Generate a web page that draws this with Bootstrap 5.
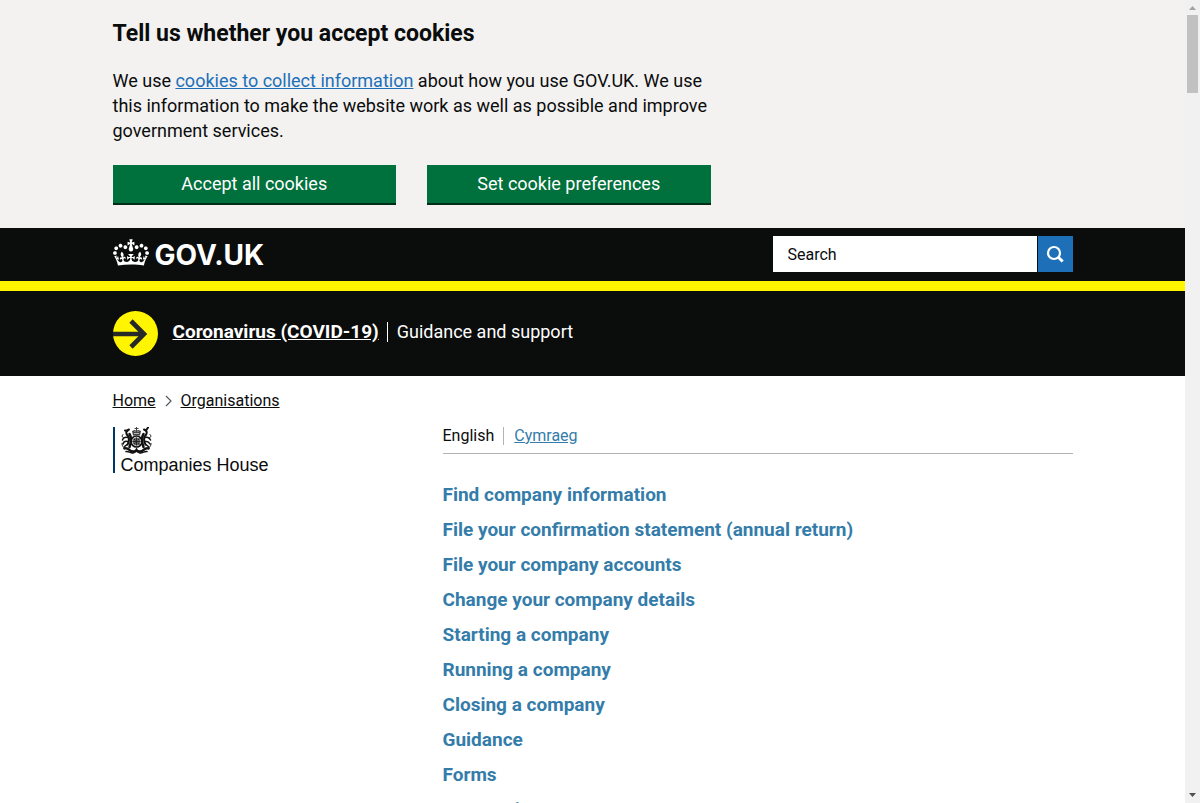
<!DOCTYPE html>
<html lang="en">
<head>
<meta charset="utf-8">
<meta name="viewport" content="width=device-width, initial-scale=1">
<title>Companies House - GOV.UK</title>
<link href="https://cdn.jsdelivr.net/npm/bootstrap@5.3.0/dist/css/bootstrap.min.css" rel="stylesheet">
<style>
  html { overflow: hidden; }
  body { font-family: Roboto, "Liberation Sans", sans-serif; font-size: 18px; line-height: 25px; color: #0b0c0c; background: #fff; padding-right: 15px; }
  .page-width { max-width: 990px; padding-left: 15px; padding-right: 15px; }
  .cookie-banner { background: #f3f2f1; padding: 19px 0 23px; }
  .cookie-banner h2 { font-size: 23px; line-height: 30px; font-weight: 700; margin-bottom: 19px; }
  .cookie-copy { max-width: 610px; margin-bottom: 22px; }
  .cookie-copy a { color: #1d70b8; }
  .cookie-actions { max-width: 598px; gap: 31px; }
  .btn-govuk { background: #00703c; color: #fff; border: 0; border-radius: 0; font-size: 18px; line-height: 25px; padding: 6px 10px 7px; box-shadow: 0 2px 0 #002d18; margin-bottom: 2px; }
  .btn-govuk:hover { background: #005a30; color: #fff; }
  .site-header { background: #0b0c0c; border-bottom: 10px solid #fff500; padding: 8px 0; }
  .site-logo { font-family: Inter, "Liberation Sans", sans-serif; font-weight: 700; font-size: 28px; line-height: 36px; color: #fff; gap: 6px; padding-top: 1px; }
  .site-logo svg { margin-top: 2px; }
  .site-search { width: 300px; gap: 1px; }
  .site-search .form-control { height: 36px; border: 0; border-radius: 0; padding: 0 15px; font-size: 16px; color: #0b0c0c; background: #fff; }
  .site-search .form-control::placeholder { color: #0b0c0c; opacity: 1; }
  .site-search .btn { width: 35px; height: 36px; background: #1d70b8; border: 0; border-radius: 0; padding: 0; flex: none; }
  .covid-bar { background: #0b0c0c; color: #fff; padding: 20px 0; }
  .covid-bar .covid-text { padding: 8px 0 12px 15px; }
  .covid-bar a { color: #fff; font-size: 19px; font-weight: 700; }
  .covid-bar .covid-note { border-left: 1px solid #fff; line-height: 20px; margin-left: 8px; padding-left: 9px; }
  .crumbs { font-size: 16px; line-height: 20px; padding-top: 15px; margin-bottom: 16px; gap: 9px; }
  .crumbs a { color: #0b0c0c; }
  .org-logo { border-left: 2px solid #003764; padding-left: 6px; height: 46px; font: 18px/22px "Liberation Sans", Arial, sans-serif; }
  .languages { font-size: 16px; line-height: 18px; border-bottom: 1px solid #b1b4b6; padding-bottom: 8px; margin-bottom: 24px; }
  .languages li + li { border-left: 1px solid #b1b4b6; margin-left: 9px; padding-left: 10px; }
  .languages a, .feature-links a { color: #347ca9; }
  .feature-links { display: grid; gap: 10px; font-size: 19px; font-weight: 700; line-height: 25px; padding-top: 4px; }
  .feature-links a { text-decoration: none; }
  .scroll-rail { width: 15px; background: #f1f1f1; z-index: 10; }
  .scroll-rail .thumb { width: 11px; height: 78px; background: #c1c1c1; }
</style>
</head>
<body>
<section class="cookie-banner" aria-label="Cookie banner">
  <div class="container-fluid page-width">
    <h2>Tell us whether you accept cookies</h2>
    <p class="cookie-copy">We use <a href="#">cookies to collect information</a> about how you use GOV.UK. We use this information to make the website work as well as possible and improve government services.</p>
    <div class="cookie-actions d-flex">
      <button type="button" class="btn btn-govuk flex-fill w-50">Accept all cookies</button>
      <button type="button" class="btn btn-govuk flex-fill w-50">Set cookie preferences</button>
    </div>
  </div>
</section>

<header class="site-header">
  <div class="container-fluid page-width d-flex justify-content-between align-items-start">
    <a href="#" class="site-logo d-flex align-items-start text-decoration-none">
      <svg width="36" height="27" viewBox="0 0 132 97" fill="#fff" aria-hidden="true"><path fill-rule="evenodd" d="M25 30.2c3.5 1.5 7.7-.2 9.1-3.7 1.5-3.6-.2-7.8-3.9-9.2-3.6-1.4-7.6.3-9.1 3.9-1.4 3.5.3 7.5 3.9 9zM9 39.5c3.6 1.5 7.8-.2 9.2-3.7 1.5-3.6-.2-7.8-3.9-9.1-3.6-1.5-7.6.2-9.1 3.8-1.4 3.5.3 7.5 3.8 9zM4.4 57.2c3.5 1.5 7.7-.2 9.1-3.8 1.5-3.6-.2-7.7-3.9-9.1-3.5-1.5-7.6.3-9.1 3.8-1.4 3.5.3 7.6 3.9 9.1zm38.3-21.4c3.5 1.5 7.7-.2 9.1-3.8 1.5-3.6-.2-7.7-3.9-9.1-3.6-1.5-7.6.3-9.1 3.8-1.3 3.6.4 7.7 3.9 9.1zm64.4-5.6c-3.6 1.5-7.8-.2-9.1-3.7-1.5-3.6.2-7.8 3.8-9.2 3.6-1.4 7.7.3 9.2 3.9 1.3 3.5-.4 7.5-3.9 9zm15.9 9.3c-3.6 1.5-7.7-.2-9.1-3.7-1.5-3.6.2-7.8 3.7-9.1 3.6-1.5 7.7.2 9.2 3.8 1.5 3.5-.3 7.5-3.8 9zm4.7 17.7c-3.6 1.5-7.8-.2-9.2-3.8-1.5-3.6.2-7.7 3.9-9.1 3.6-1.5 7.7.3 9.2 3.8 1.3 3.5-.4 7.6-3.9 9.1zM89.3 35.8c-3.6 1.5-7.8-.2-9.2-3.8-1.4-3.6.2-7.7 3.9-9.1 3.6-1.5 7.7.3 9.2 3.8 1.4 3.6-.3 7.7-3.9 9.1zM69.7 17.7l8.9 4.7V9.3l-8.9 2.8c-.2-.3-.5-.6-.9-.9L72.4 0H59.6l3.5 11.2c-.3.3-.6.5-.9.9l-8.8-2.8v13.1l8.8-4.7c.3.3.6.7.9.9l-5 15.4v.1c-.2.8-.4 1.6-.4 2.4 0 4.1 3.1 7.5 7 8.1h.2c.3 0 .7.1 1 .1.4 0 .7 0 1-.1h.2c4-.6 7.1-4.1 7.1-8.1 0-.8-.1-1.7-.4-2.4V34l-5.1-15.4c.4-.2.7-.6 1-.9zM66 92.8c16.9 0 32.8 1.1 47.1 3.2 4-16.9 8.9-26.7 14-33.5l-9.6-3.4c1 4.9 1.1 7.2 0 10.2-1.5-1.4-3-4.3-4.2-8.7L108.6 76c2.8-2 5-3.2 7.5-3.3-4.4 9.4-10 11.9-13.6 11.2-4.3-.8-6.3-4.6-5.6-7.9 1-4.7 5.7-5.9 8-.5 4.3-8.7-3-11.4-7.6-8.8 7.1-7.2 7.9-13.5 2.1-21.1-8 6.1-8.1 12.3-4.5 20.8-4.7-5.4-12.1-2.5-9.5 6.2 3.4-5.2 7.9-2 7.2 3.1-.6 4.3-6.4 7.8-13.5 7.2-10.3-.9-10.9-8-11.2-13.8 2.5-.5 7.1 1.8 11 7.3L80.2 60c-4.1 4.4-8 5.3-12.3 5.4 1.4-4.4 8-11.6 8-11.6H55.5s6.4 7.2 7.9 11.6c-4.2-.1-8-1-12.3-5.4l1.4 16.4c3.9-5.5 8.5-7.7 10.9-7.3-.3 5.8-.9 12.8-11.1 13.8-7.2.6-12.9-2.9-13.5-7.2-.7-5 3.8-8.3 7.1-3.1 2.7-8.7-4.6-11.6-9.4-6.2 3.7-8.5 3.6-14.7-4.6-20.8-5.8 7.6-5 13.9 2.2 21.1-4.7-2.6-11.9.1-7.7 8.8 2.3-5.5 7.1-4.2 8.1.5.7 3.3-1.3 7.1-5.7 7.9-3.5.7-9-1.8-13.5-11.2 2.5.1 4.7 1.3 7.5 3.3l-4.7-15.4c-1.2 4.4-2.7 7.2-4.3 8.7-1.1-3-.9-5.3 0-10.2l-9.5 3.4c5 6.900 9.900 16.700 14 33.500 14.800-2.100 30.800-3.200 47.700-3.200z"/></svg>
      <span>GOV.UK</span>
    </a>
    <form class="site-search d-flex" role="search" onsubmit="return false">
      <label for="site-search-text" class="visually-hidden">Search</label>
      <input id="site-search-text" type="search" class="form-control" placeholder="Search">
      <button type="submit" class="btn d-flex align-items-center justify-content-center" aria-label="Search GOV.UK">
        <svg width="18" height="18" viewBox="0 0 18 18" fill="none" stroke="#fff" aria-hidden="true"><circle cx="8" cy="8" r="6" stroke-width="2.2"/><path d="M12 12l4.700 4.500" stroke-width="3"/></svg>
      </button>
    </form>
  </div>
</header>

<section class="covid-bar" aria-label="Coronavirus">
  <div class="container-fluid page-width d-flex align-items-start">
    <svg width="45" height="45" viewBox="0 0 45 45" aria-hidden="true" class="flex-shrink-0"><circle cx="22.5" cy="22.5" r="22.5" fill="#fff500"/><path d="M0 23h31M18 10l13 13-13 13" fill="none" stroke="#272828" stroke-width="4.6"/></svg>
    <div class="covid-text d-flex align-items-center flex-wrap">
      <a href="#">Coronavirus (COVID-19)</a>
      <span class="covid-note">Guidance and support</span>
    </div>
  </div>
</section>

<div class="container-fluid page-width">
  <nav aria-label="Breadcrumb">
    <ol class="crumbs list-unstyled d-flex align-items-center">
      <li><a href="#">Home</a></li>
      <li class="d-flex" aria-hidden="true"><svg width="7" height="12" viewBox="0 0 7 12" fill="none" stroke="#505a5f" stroke-width="1.2"><path d="M1 1l5 5-5 5"/></svg></li>
      <li><a href="#">Organisations</a></li>
    </ol>
  </nav>
  <main class="row" style="--bs-gutter-x: 30px">
    <div class="col-4">
      <div class="org-logo">
        <svg width="31" height="27" viewBox="0 0 62 54" aria-hidden="true" class="d-block">
          <g fill="none" stroke="#111" stroke-linecap="round">
            <path d="M16 5c-8 3-6 9-2 13 3 4 2 12-1 17M13 8l-5-1" stroke-width="4"/>
            <path d="M46 5c8 3 6 9 2 13-3 4-2 12 1 17M50 7l4-6" stroke-width="4"/>
            <path d="M17 14c5 8 3 18 0 26M45 14c-5 8-3 18 0 26" stroke-width="5"/>
            <path d="M14 21c-6-2-10 1-11 5M13 29c-5-1-8 1-9 5M13 35c-6 2-6 4-7 7" stroke-width="3"/>
            <path d="M48 21c6-2 9 1 11 5M49 29c5-1 7 1 9 5M49 35c6 2 6 4 7 7" stroke-width="3"/>
            <path d="M4 15c-3 3-2 6 2 7M2 33c0 4 1 5 3 7M58 15c3 3 2 6-2 7M60 33c0 4-1 5-3 7" stroke-width="2"/>
            <path d="M7 43c8-4 9 7 18 6 3 0 5-1 6-3 1 2 3 3 6 3 9 1 10-10 18-6" stroke-width="5"/>
            <path d="M10 49c5-1 8 3 13 3M52 49c-5-1-8 3-13 3M24 52l7-4 7 4" stroke-width="3"/>
            <circle cx="31" cy="29" r="11" stroke-width="3.4"/>
          </g>
          <circle cx="31" cy="29" r="8" fill="#666"/>
          <path d="M31 21v16M23 29h16M26 24l3 3M34 32l3 3M26 34l3-3M34 26l3-3" stroke="#222" stroke-width="2"/>
          <path d="M24 17l-2-9 5-2 3 1V4h-3V2h3V0h2v2h3v2h-3v3l3-1 5 2-2 9z" fill="#444"/>
          <path d="M26 13h10M27 9h2M33 9h2" stroke="#eee" stroke-width="1.4"/>
        </svg>
        <span class="d-block">Companies House</span>
      </div>
    </div>
    <div class="col-8">
      <ul class="languages list-unstyled d-flex">
        <li>English</li>
        <li><a href="#" lang="cy">Cymraeg</a></li>
      </ul>
      <ul class="feature-links list-unstyled">
        <li><a href="#">Find company information</a></li>
        <li><a href="#">File your confirmation statement (annual return)</a></li>
        <li><a href="#">File your company accounts</a></li>
        <li><a href="#">Change your company details</a></li>
        <li><a href="#">Starting a company</a></li>
        <li><a href="#">Running a company</a></li>
        <li><a href="#">Closing a company</a></li>
        <li><a href="#">Guidance</a></li>
        <li><a href="#">Forms</a></li>
        <li><a href="#">Our services</a></li>
      </ul>
    </div>
  </main>
</div>

<div class="scroll-rail position-fixed top-0 end-0 vh-100 d-flex flex-column align-items-center justify-content-between" aria-hidden="true">
  <div class="d-flex flex-column align-items-center">
    <svg width="15" height="15" viewBox="0 0 15 15"><path d="M4 10l3.5-4 3.5 4z" fill="#a3a3a3"/></svg>
    <div class="thumb"></div>
  </div>
  <svg width="15" height="15" viewBox="0 0 15 15"><path d="M4 5h7l-3.5 4z" fill="#505050"/></svg>
</div>
<script src="https://cdn.jsdelivr.net/npm/bootstrap@5.3.0/dist/js/bootstrap.bundle.min.js"></script>
</body>
</html>
